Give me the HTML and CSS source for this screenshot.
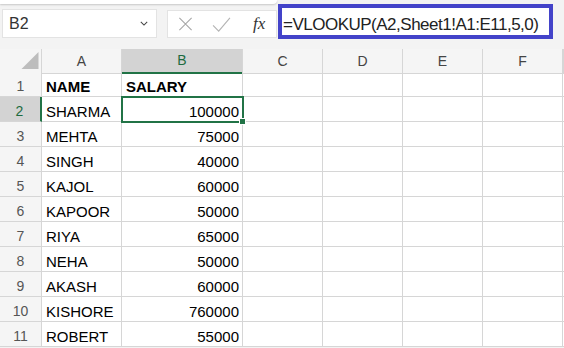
FILE: index.html
```html
<!DOCTYPE html>
<html>
<head>
  <link rel="stylesheet" href="styles.css">
</head>
<body>
  <div class="ribbon-edge"></div>
  <div class="formula-row">
    <div class="name-box">
      <span>B2</span>
      <svg class="chevron" viewBox="0 0 10 6" fill="none" stroke="#444" stroke-width="1.3">
        <path d="M1 1l4 4 4-4"/>
      </svg>
    </div>
    <div class="fx-box">
      <svg class="fx-icon" viewBox="0 0 16 16" fill="none" stroke="#a6a6a6" stroke-width="1.2">
        <path d="M1 1l14 14M15 1L1 15"/>
      </svg>
      <svg class="fx-icon check" viewBox="0 0 20 16" fill="none" stroke="#b4b4b4" stroke-width="1.2">
        <path d="M1 9l6 6L19 1"/>
      </svg>
      <span class="fx">fx</span>
    </div>
    <div class="formula">=VLOOKUP(A2,Sheet1!A1:E11,5,0)</div>
  </div>

  <div class="sheet">
    <div class="row head">
      <div class="corner">
        <svg viewBox="0 0 18 18"><polygon points="18 0 18 18 0 18" fill="#bdbdbd"/></svg>
      </div>
      <div class="ch">A</div>
      <div class="ch active">B</div>
      <div class="ch">C</div>
      <div class="ch">D</div>
      <div class="ch">E</div>
      <div class="ch">F</div>
      <div class="ch"></div>
    </div>
    <div class="row">
      <div class="rh">1</div><div class="c bold">NAME</div><div class="c bold">SALARY</div>
      <div class="c"></div><div class="c"></div><div class="c"></div><div class="c"></div><div class="c"></div>
    </div>
    <div class="row">
      <div class="rh active">2</div><div class="c">SHARMA</div><div class="c num sel">100000</div>
      <div class="c"></div><div class="c"></div><div class="c"></div><div class="c"></div><div class="c"></div>
    </div>
    <div class="row">
      <div class="rh">3</div><div class="c">MEHTA</div><div class="c num">75000</div>
      <div class="c"></div><div class="c"></div><div class="c"></div><div class="c"></div><div class="c"></div>
    </div>
    <div class="row">
      <div class="rh">4</div><div class="c">SINGH</div><div class="c num">40000</div>
      <div class="c"></div><div class="c"></div><div class="c"></div><div class="c"></div><div class="c"></div>
    </div>
    <div class="row">
      <div class="rh">5</div><div class="c">KAJOL</div><div class="c num">60000</div>
      <div class="c"></div><div class="c"></div><div class="c"></div><div class="c"></div><div class="c"></div>
    </div>
    <div class="row">
      <div class="rh">6</div><div class="c">KAPOOR</div><div class="c num">50000</div>
      <div class="c"></div><div class="c"></div><div class="c"></div><div class="c"></div><div class="c"></div>
    </div>
    <div class="row">
      <div class="rh">7</div><div class="c">RIYA</div><div class="c num">65000</div>
      <div class="c"></div><div class="c"></div><div class="c"></div><div class="c"></div><div class="c"></div>
    </div>
    <div class="row">
      <div class="rh">8</div><div class="c">NEHA</div><div class="c num">50000</div>
      <div class="c"></div><div class="c"></div><div class="c"></div><div class="c"></div><div class="c"></div>
    </div>
    <div class="row">
      <div class="rh">9</div><div class="c">AKASH</div><div class="c num">60000</div>
      <div class="c"></div><div class="c"></div><div class="c"></div><div class="c"></div><div class="c"></div>
    </div>
    <div class="row">
      <div class="rh">10</div><div class="c">KISHORE</div><div class="c num">760000</div>
      <div class="c"></div><div class="c"></div><div class="c"></div><div class="c"></div><div class="c"></div>
    </div>
    <div class="row">
      <div class="rh">11</div><div class="c">ROBERT</div><div class="c num">55000</div>
      <div class="c"></div><div class="c"></div><div class="c"></div><div class="c"></div><div class="c"></div>
    </div>
  </div>
</body>
</html>
```

FILE: styles.css
```css
body {
  margin: 0;
  background: #f3f3f3;
  font-family: "Liberation Sans", Arial, sans-serif;
  overflow: hidden;
}
.ribbon-edge {
  width: 277px;
  height: 4px;
  background: #fff;
  border-bottom-right-radius: 8px;
  box-shadow: 0 1px 2px rgba(0, 0, 0, 0.18);
}
.formula-row {
  display: flex;
  align-items: flex-start;
  height: 45px;
  padding-left: 2px;
}
.name-box {
  box-sizing: border-box;
  width: 155px;
  height: 29px;
  margin-top: 5px;
  background: #fff;
  border: 1px solid #e3e3e3;
  display: flex;
  align-items: center;
  justify-content: space-between;
  padding: 0 8px 0 6px;
  font-size: 16px;
  color: #333;
}
.chevron {
  width: 8px;
  height: 5px;
}
.fx-box {
  box-sizing: border-box;
  width: 110px;
  height: 28px;
  margin: 6px 0 0 10px;
  background: #fff;
  border: 1px solid #e3e3e3;
  display: flex;
  align-items: center;
  padding-left: 10px;
}
.fx-icon {
  width: 15px;
  height: 14px;
}
.fx-icon.check {
  width: 19px;
  height: 15px;
  margin-left: 19px;
}
.fx {
  margin-left: 22px;
  font-family: "Liberation Serif", serif;
  font-style: italic;
  font-size: 17px;
  color: #333;
}
.formula {
  box-sizing: border-box;
  width: 275px;
  height: 35px;
  margin-left: 1px;
  background: #fff;
  border: 4px solid #4343c9;
  padding: 3px 0 0 1px;
  font-size: 17px;
  letter-spacing: -0.5px;
  line-height: 27px;
  color: #222;
  white-space: nowrap;
  overflow: hidden;
}
.sheet {
  background: #fff;
}
.row {
  display: grid;
  grid-template-columns: 42px 80px 121px 80px 80px 80px 80px 1fr;
  height: 25px;
}
.row.head {
  height: 23px;
}
.row > div {
  box-sizing: border-box;
  border-right: 1px solid #d6d6d6;
  border-bottom: 1px solid #d6d6d6;
}
.corner, .ch, .rh {
  background: #f5f5f5;
}
.corner {
  display: flex;
  align-items: flex-end;
  justify-content: flex-end;
  padding: 0 2px 4px 0;
}
.corner svg {
  width: 18px;
  height: 17px;
}
.ch {
  font-size: 14px;
  color: #444;
  text-align: center;
  line-height: 24px;
}
.ch.active {
  background: #d3d3d3;
  color: #1d6b40;
  border-bottom: 2px solid #217346;
  line-height: 23px;
}
.rh {
  font-size: 14px;
  color: #555;
  text-align: center;
  line-height: 17px;
  padding-top: 6px;
}
.rh.active {
  background: #d3d3d3;
  color: #1d6b40;
  border-right: 2px solid #217346;
  padding-right: 1px;
}
.c {
  font-size: 15px;
  color: #000;
  line-height: 17px;
  padding: 6px 3px 0 4px;
  white-space: nowrap;
}
.bold {
  font-weight: bold;
}
.num {
  text-align: right;
}
.sel {
  position: relative;
  z-index: 1;
  outline: 2px solid #217346;
  outline-offset: -1px;
}
.sel::after {
  content: "";
  position: absolute;
  right: -4px;
  bottom: -4px;
  width: 5px;
  height: 5px;
  background: #217346;
  border: 1px solid #fff;
}
```
